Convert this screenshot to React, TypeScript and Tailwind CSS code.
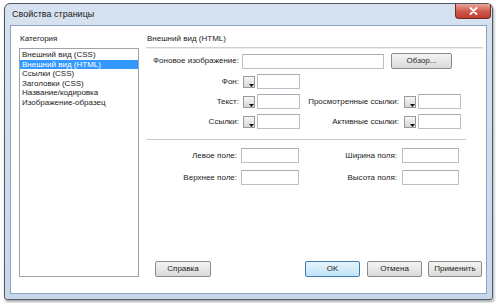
import React from 'react';

const font = { fontFamily: '"Liberation Sans", Arial, sans-serif' };

const categories = [
  'Внешний вид (CSS)',
  'Внешний вид (HTML)',
  'Ссылки (CSS)',
  'Заголовки (CSS)',
  'Название/кодировка',
  'Изображение-образец',
];

const Input = ({ className = '' }: { className?: string }) => (
  <div
    className={`h-[15px] border border-[#bcc0c6] border-t-[#a9acb2] bg-white ${className}`}
  />
);

const Swatch = ({ className = '' }: { className?: string }) => (
  <div
    className={`relative h-[12px] w-[12px] shrink-0 border border-[#9a9a9a] bg-gradient-to-b from-[#f6f6f6] to-[#d6d6d6] ${className}`}
  >
    <svg className="absolute right-[0px] bottom-[0px]" width="5" height="3" viewBox="0 0 5 3">
      <path d="M0 0 H5 L2.5 3 Z" fill="#111" />
    </svg>
  </div>
);

const Button = ({
  label,
  className = '',
  primary = false,
}: {
  label: string;
  className?: string;
  primary?: boolean;
}) => (
  <div
    className={`flex h-[16px] items-center justify-center whitespace-nowrap rounded-[2px] border text-[8px] text-[#1e1e1e] ${
      primary
        ? 'border-[#3d7bad] bg-gradient-to-b from-[#e6f4fc] to-[#bfe3f7]'
        : 'border-[#8a8a8a] bg-gradient-to-b from-[#f4f4f4] to-[#dadada]'
    } ${className}`}
  >
    {label}
  </div>
);

const Label = ({ text, className = '' }: { text: string; className?: string }) => (
  <div className={`flex shrink-0 justify-end text-[8px] leading-[10px] text-[#222] ${className}`}>
    <span className="whitespace-nowrap">{text}</span>
  </div>
);

export default function App() {
  return (
    <div className="h-[303px] w-[499px] overflow-hidden bg-white pt-[3px] pl-[4px]" style={font}>
      <div className="flex h-[297px] w-[489px] flex-col rounded-t-[6px] rounded-b-[3px] border border-[#505a66] bg-gradient-to-b from-[#d6e2f0] to-[#c8d8ea] shadow-[1px_2px_3px_rgba(0,0,0,0.35)]">
        {/* title bar */}
        <div className="flex h-[21px] items-start justify-between">
          <div className="pt-[5px] pl-[7px] text-[9px] leading-[11px] text-[#1a1a1a]">
            Свойства страницы
          </div>
          <div className="mr-[1px] flex h-[15px] w-[36px] items-center justify-center rounded-b-[4px] border border-t-0 border-[#6e2a24] bg-gradient-to-b from-[#e8a59c] via-[#cf5b4d] to-[#c23c2c]">
            <svg width="9" height="8" viewBox="0 0 9 8">
              <path d="M1.5 1 L7.5 7 M7.5 1 L1.5 7" stroke="#fff" strokeWidth="1.8" strokeLinecap="round" />
            </svg>
          </div>
        </div>

        {/* client */}
        <div className="mx-[5px] flex h-[269px] border border-[#8ea3bd] bg-white">
          <div className="w-[135px] shrink-0">
            <div className="pt-[8px] pl-[9px] text-[8px] leading-[10px] text-[#222]">Категория</div>
            <div className="mt-[4px] ml-[8px] h-[229px] w-[120px] border border-[#9ea3aa] pt-[1px]">
              {categories.map((c, i) => (
                <div
                  key={c}
                  className={`whitespace-nowrap pl-[2px] text-[8px] leading-[9.5px] ${
                    i === 1 ? 'bg-[#3399ff] text-white' : 'text-[#222]'
                  }`}
                >
                  {c}
                </div>
              ))}
            </div>
          </div>

          <div className="flex flex-1 flex-col">
            <div className="pt-[8px] pl-[1px] text-[8px] leading-[10px] text-[#222]">Внешний вид (HTML)</div>
            <div className="mt-[3px] h-[2px] w-[337px] border-t border-[#d0d0d0] bg-[#ececec]" />

            <div className="mt-[4px] flex h-[16px] items-center">
              <Label text="Фоновое изображение:" className="w-[93px]" />
              <Input className="ml-[3px] w-[142px]" />
              <Button label="Обзор..." className="ml-[7px] w-[61px]" />
            </div>

            <div className="mt-[5px] flex h-[15px] items-center">
              <Label text="Фон:" className="w-[93px]" />
              <Swatch className="ml-[4px]" />
              <Input className="ml-[2px] w-[43px]" />
            </div>

            <div className="mt-[5px] flex h-[15px] items-center">
              <Label text="Текст:" className="w-[93px]" />
              <Swatch className="ml-[4px]" />
              <Input className="ml-[2px] w-[43px]" />
              <Label text="Просмотренные ссылки:" className="w-[99px]" />
              <Swatch className="ml-[5px]" />
              <Input className="ml-[2px] w-[43px]" />
            </div>

            <div className="mt-[5px] flex h-[15px] items-center">
              <Label text="Ссылки:" className="w-[93px]" />
              <Swatch className="ml-[4px]" />
              <Input className="ml-[2px] w-[43px]" />
              <Label text="Активные ссылки:" className="w-[99px]" />
              <Swatch className="ml-[5px]" />
              <Input className="ml-[2px] w-[43px]" />
            </div>

            <div className="mt-[10px] h-[2px] w-[320px] border-t border-[#c8c8c8] bg-white" />

            <div className="mt-[7px] flex h-[15px] items-center">
              <Label text="Левое поле:" className="w-[91px]" />
              <Input className="ml-[4px] w-[58px]" />
              <Label text="Ширина поля:" className="w-[98px]" />
              <Input className="ml-[5px] w-[57px]" />
            </div>

            <div className="mt-[7px] flex h-[15px] items-center">
              <Label text="Верхнее поле:" className="w-[91px]" />
              <Input className="ml-[4px] w-[58px]" />
              <Label text="Высота поля:" className="w-[98px]" />
              <Input className="ml-[5px] w-[57px]" />
            </div>

            <div className="mt-auto mb-[16px] flex items-center">
              <Button label="Справка" className="ml-[9px] w-[56px]" />
              <div className="flex-1" />
              <Button label="OK" primary className="w-[55px]" />
              <Button label="Отмена" className="ml-[7px] w-[55px]" />
              <Button label="Применить" className="ml-[6px] mr-[4px] w-[54px]" />
            </div>
          </div>
        </div>
      </div>
    </div>
  );
}
